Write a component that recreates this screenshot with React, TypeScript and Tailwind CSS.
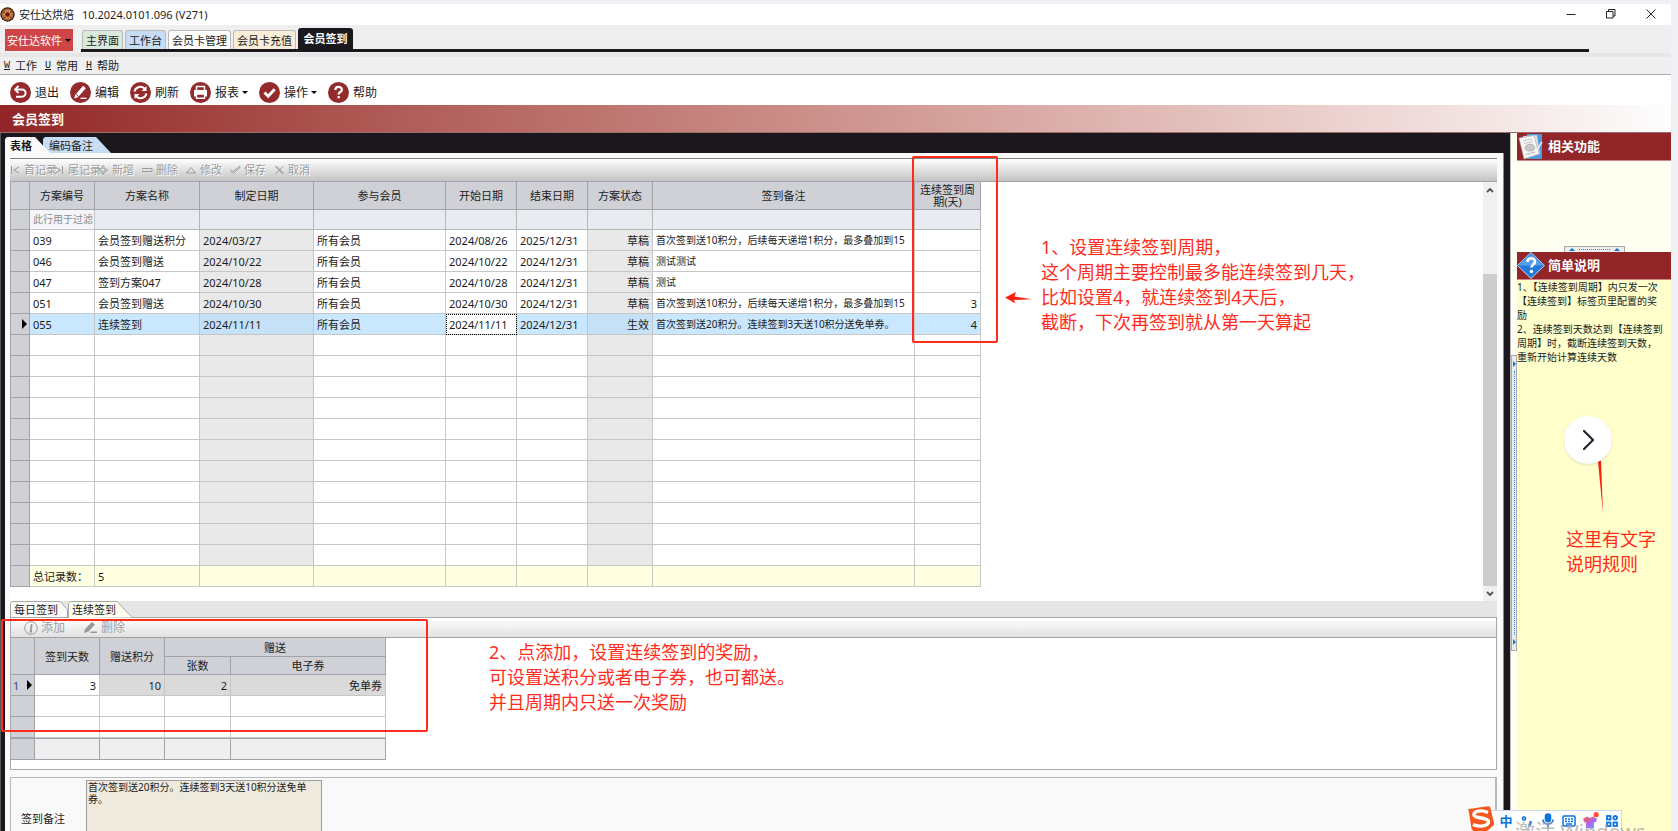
import type { ReactNode } from "react";
import clsx from "clsx";

type Plan = {
  code: string;
  name: string;
  created: string;
  members: string;
  start: string;
  end: string;
  status: string;
  remark: string;
  cycle: string;
};

const plans: Plan[] = [
  { code: "039", name: "会员签到赠送积分", created: "2024/03/27", members: "所有会员", start: "2024/08/26", end: "2025/12/31", status: "草稿", remark: "首次签到送10积分，后续每天递增1积分，最多叠加到15", cycle: "" },
  { code: "046", name: "会员签到赠送", created: "2024/10/22", members: "所有会员", start: "2024/10/22", end: "2024/12/31", status: "草稿", remark: "测试测试", cycle: "" },
  { code: "047", name: "签到方案047", created: "2024/10/28", members: "所有会员", start: "2024/10/28", end: "2024/12/31", status: "草稿", remark: "测试", cycle: "" },
  { code: "051", name: "会员签到赠送", created: "2024/10/30", members: "所有会员", start: "2024/10/30", end: "2024/12/31", status: "草稿", remark: "首次签到送10积分，后续每天递增1积分，最多叠加到15", cycle: "3" },
  { code: "055", name: "连续签到", created: "2024/11/11", members: "所有会员", start: "2024/11/11", end: "2024/12/31", status: "生效", remark: "首次签到送20积分。连续签到3天送10积分送免单券。", cycle: "4" },
];

const headers = ["方案编号", "方案名称", "制定日期", "参与会员", "开始日期", "结束日期", "方案状态", "签到备注"];

const cell = "border-r border-b border-[#c6c6c6] px-[3px] py-0 overflow-hidden whitespace-nowrap";
const head = "border-r border-b border-[#a2a3a8] bg-[#d0d1d7] p-0 font-normal";

function Circle({ children }: { children: ReactNode }) {
  return (
    <svg width="21" height="21" viewBox="0 0 21 21" fill="none" stroke="#fff" strokeWidth="2" className="shrink-0">
      <circle cx="10.5" cy="10.5" r="10.5" fill="#952a2c" stroke="none" />
      {children}
    </svg>
  );
}

function TitleBar() {
  return (
    <header className="flex h-[21px] items-center bg-white pb-px">
      <svg width="15" height="15" viewBox="0 0 15 15" className="shrink-0">
        <circle cx="7.5" cy="7.5" r="7.2" fill="#3b1c0c" />
        <circle cx="7.5" cy="7.5" r="5.9" fill="#b56a34" />
        <circle cx="7.5" cy="7.3" r="4" fill="#d08b52" />
        <circle cx="7.5" cy="7.5" r="2.3" fill="#6e1a10" />
        <path d="M3 4.500l2 1M12 4.500l-2 1M3.500 11l2-1.300M11.500 11l-2-1.300" stroke="#5a2a12" strokeWidth="1" />
      </svg>
      <span className="ml-1">安仕达烘焙</span>
      <span className="ml-2">10.2024.0101.096 (V271)</span>
      <div className="mr-[11px] ml-auto flex items-center gap-[22px]">
        <button aria-label="最小化" className="flex w-[18px] justify-center">
          <svg width="10" height="10" stroke="#222"><path d="M.5 5.500h9" /></svg>
        </button>
        <button aria-label="还原" className="flex w-[18px] justify-center">
          <svg width="10" height="10" fill="none" stroke="#222"><path d="M.5 2.500h6.500v6.500h-6.500zM2.500 2.500v-2h6.500v6.500h-2" /></svg>
        </button>
        <button aria-label="关闭" className="flex w-[18px] justify-center">
          <svg width="10" height="10" stroke="#222"><path d="M.5.5l9 9M9.500.5l-9 9" /></svg>
        </button>
      </div>
    </header>
  );
}

function WindowTabs() {
  return (
    <nav className="flex h-[28px] items-start bg-[#efefef] pt-[3px] pl-[5px]">
      <button className="mt-px flex h-[22px] w-[68px] items-center justify-center gap-[3px] bg-[#cf4446] text-white">
        安仕达软件
        <span className="border-x-[3px] border-t-[3px] border-x-transparent border-t-black" />
      </button>
      <div className="mr-[82px] ml-2 flex h-[24px] flex-1 items-end gap-[2px] border-b-[3px] border-[#1a181d] pl-px">
        <button className="h-[19px] w-[41px] rounded-t-[3px] border border-b-0 border-[#b9b9b9] bg-[#d8eadb]">主界面</button>
        <button className="h-[19px] w-[41px] rounded-t-[3px] border border-b-0 border-[#b9b9b9] bg-[#c8dcf4]">工作台</button>
        <button className="h-[19px] w-[63px] rounded-t-[3px] border border-b-0 border-[#b9b9b9] bg-white">会员卡管理</button>
        <button className="h-[19px] w-[63px] rounded-t-[3px] border border-b-0 border-[#b9b9b9] bg-[#fbeed8]">会员卡充值</button>
        <button className="h-[21px] w-[55px] rounded-t-[3px] bg-[#1a181d] font-bold text-white">会员签到</button>
      </div>
    </nav>
  );
}

function MenuBar() {
  const items = [["W", "工作"], ["U", "常用"], ["H", "帮助"]];
  return (
    <div className="flex h-[22px] items-center gap-2 border-t-4 border-b border-t-[#e6e6e6] border-b-[#adadad] bg-[#efefef] pl-1">
      {items.map(([key, label]) => (
        <button key={key} className="flex w-[33px] items-center justify-between">
          <span className="font-['Liberation_Mono',monospace] text-[10px] leading-[10px] underline">{key}</span>
          {label}
        </button>
      ))}
    </div>
  );
}

function Caret() {
  return <span className="-ml-px border-x-[3px] border-t-[3px] border-x-transparent border-t-black" />;
}

function ToolBar() {
  const btn = "flex items-center gap-1 text-[12px]";
  return (
    <div className="flex h-[30px] items-center gap-[11px] bg-white pt-[5px] pl-[10px]">
      <button className={btn}>
        <Circle><path d="M6 7.500h6a3.200 3.200 0 0 1 0 7.200H6" /><path d="M8.500 4L5 7.500 8.500 11" strokeWidth="1.800" /></Circle>
        退出
      </button>
      <button className={btn}>
        <Circle><path d="M7.500 13L14.500 5" strokeWidth="3.600" /><path d="M4.300 16.500l1-4.500 3.300 3z" fill="#fff" stroke="none" /><path d="M10.500 16.300h6" strokeWidth="1.300" /></Circle>
        编辑
      </button>
      <button className={btn}>
        <Circle>
          <path d="M4.500 9.500a6 6 0 0 1 10.500-2.500M16.500 11.500a6 6 0 0 1-10.500 2.500" />
          <path d="M16.500 4v5h-5zM4.500 17v-5h5z" fill="#fff" stroke="none" />
        </Circle>
        刷新
      </button>
      <button className={btn}>
        <Circle>
          <path d="M6.500 8V4.500h8V8" strokeWidth="1.500" />
          <path d="M4 8h13v6.500H4z" fill="#fff" stroke="none" />
          <path d="M6.500 12h8v4.300h-8z" fill="#952a2c" strokeWidth="1.400" />
        </Circle>
        报表
        <Caret />
      </button>
      <button className={btn}>
        <Circle><path d="M5.500 10.500l3.700 3.700 6.500-7" strokeWidth="3" /></Circle>
        操作
        <Caret />
      </button>
      <button className={btn}>
        <Circle>
          <path d="M7.300 8c0-4.200 6.600-4.200 6.600-.3 0 2.300-3.300 2.300-3.300 4.700" strokeWidth="2.200" />
          <path d="M9.500 14h2.300v2.300h-2.300z" fill="#fff" stroke="none" />
        </Circle>
        帮助
      </button>
    </div>
  );
}

const recordActions: [string, string][] = [
  ["首记录", "M1.500 1v8M9 2L3.500 5 9 8"],
  ["尾记录", "M8.500 1v8M1 2l5.500 3L1 8"],
  ["新增", "M4 4V1h2v3h3v2H6v3H4V6H1V4z"],
  ["删除", "M0 3.500h10v3H0z"],
  ["修改", "M.5 8L5 2.500 9.500 8z"],
  ["保存", "M0 5.500l3 3L10.500 2M1 4.500l2 2L10 1"],
  ["取消", "M1 1l7.500 8M2.500 1L9.500 8.500M9.500 1l-8 8"],
];

function RecordBar() {
  return (
    <div className="flex h-[23px] items-center border-t border-[#808080] bg-linear-to-b from-white to-[#c3c3c3] pb-px text-[#9c9c9c]">
      {recordActions.map(([label, d]) => (
        <button key={label} className="flex w-[44px] shrink-0 items-center gap-[3px] whitespace-nowrap [text-shadow:1px_1px_#fff]">
          <svg width="11" height="10" fill="none" stroke="currentColor" className="shrink-0"><path d={d} /></svg>
          {label}
        </button>
      ))}
    </div>
  );
}

function PlanTable() {
  return (
    <table className="w-[971px] table-fixed border-separate border-spacing-0 border-l border-[#a2a3a8]">
      <colgroup>
        <col className="w-[19px]" />
        <col className="w-[65px]" />
        <col className="w-[105px]" />
        <col className="w-[114px]" />
        <col className="w-[132px]" />
        <col className="w-[71px]" />
        <col className="w-[71px]" />
        <col className="w-[65px]" />
        <col className="w-[262px]" />
        <col className="w-[66px]" />
      </colgroup>
      <thead>
        <tr className="h-[28px]">
          <th className={head} />
          {headers.map((h) => (
            <th key={h} className={head}>{h}</th>
          ))}
          <th className={clsx(head, "leading-[12px]")}>连续签到周<br />期(天)</th>
        </tr>
        <tr className="h-[20px]">
          <td className={head} />
          <td className="border-r border-b border-[#c6c6c6] bg-[#f3f5f8] p-0">
            <input aria-label="过滤方案编号" placeholder="此行用于过滤" className="block w-full bg-transparent pl-[3px] text-[10px] outline-none placeholder:text-[#8c8c8c]" />
          </td>
          {Array.from({ length: 8 }, (_, i) => (
            <td key={i} className="border-r border-b border-[#b4b6ba] bg-[#e8ebf0] p-0" />
          ))}
        </tr>
      </thead>
      <tbody>
        {plans.map((p) => {
          const on = p.code === "055";
          const bg = on ? "bg-[#c9e7ff]" : "bg-white";
          const ro = on ? "bg-[#c4e1f8]" : "bg-[#e9e9e9]";
          return (
            <tr key={p.code} className="h-[21px]">
              <td className={head}>
                {on && <span className="mr-[2px] ml-auto block w-0 border-y-[5px] border-l-[5px] border-y-transparent border-l-black" />}
              </td>
              <td className={clsx(cell, bg)}>{p.code}</td>
              <td className={clsx(cell, bg)}>{p.name}</td>
              <td className={clsx(cell, ro)}>{p.created}</td>
              <td className={clsx(cell, bg)}>{p.members}</td>
              <td className={clsx(cell, on ? "bg-white outline-1 -outline-offset-1 outline-dotted outline-black" : bg)}>{p.start}</td>
              <td className={clsx(cell, bg)}>{p.end}</td>
              <td className={clsx(cell, ro, "text-right")}>{p.status}</td>
              <td className={clsx(cell, bg, "text-[10px]")}>{p.remark}</td>
              <td className={clsx(cell, bg, "text-right")}>{p.cycle}</td>
            </tr>
          );
        })}
        {Array.from({ length: 11 }, (_, r) => (
          <tr key={r} className="h-[21px]">
            <td className={head} />
            {Array.from({ length: 9 }, (_, c) => (
              <td key={c} className={clsx(cell, c === 2 || c === 6 ? "bg-[#e9e9e9]" : "bg-white")} />
            ))}
          </tr>
        ))}
      </tbody>
      <tfoot>
        <tr className="h-[21px]">
          <td className={head} />
          <td className={clsx(cell, "bg-[#ffffe1]")}>总记录数：</td>
          <td className={clsx(cell, "bg-[#ffffe1]")}>5</td>
          {Array.from({ length: 7 }, (_, c) => (
            <td key={c} className={clsx(cell, "bg-[#ffffe1]")} />
          ))}
        </tr>
      </tfoot>
    </table>
  );
}

function ScrollBar() {
  return (
    <div className="flex w-[14px] flex-col items-center bg-[#f0f0f0]">
      <svg width="14" height="17" fill="none" stroke="#505050" strokeWidth="1.800"><path d="M4 10l3-3 3 3" /></svg>
      <div className="mt-[75px] w-full flex-1 bg-[#cdcdcd]" />
      <svg width="14" height="15" fill="none" stroke="#505050" strokeWidth="1.800"><path d="M4 6l3 3 3-3" /></svg>
    </div>
  );
}

function RewardTable() {
  return (
    <table className="w-[375px] table-fixed border-separate border-spacing-0">
      <colgroup>
        <col className="w-[24px]" />
        <col className="w-[65px]" />
        <col className="w-[65px]" />
        <col className="w-[66px]" />
        <col className="w-[155px]" />
      </colgroup>
      <thead>
        <tr className="h-[19px]">
          <th rowSpan={2} className={head} />
          <th rowSpan={2} className={head}>签到天数</th>
          <th rowSpan={2} className={head}>赠送积分</th>
          <th colSpan={2} className={head}>赠送</th>
        </tr>
        <tr className="h-[18px]">
          <th className={head}>张数</th>
          <th className={head}>电子券</th>
        </tr>
      </thead>
      <tbody>
        <tr className="h-[21px] text-right">
          <td className={head}>
            <span className="flex items-center justify-between px-[2px] text-[#1d4f91]">
              1
              <span className="border-y-[5px] border-l-[5px] border-y-transparent border-l-black" />
            </span>
          </td>
          <td className={clsx(cell, "bg-white")}>3</td>
          <td className={clsx(cell, "bg-[#dadada]")}>10</td>
          <td className={clsx(cell, "bg-[#dadada]")}>2</td>
          <td className={clsx(cell, "bg-[#dadada]")}>免单券</td>
        </tr>
        {[0, 1].map((r) => (
          <tr key={r} className="h-[21px]">
            <td className={head} />
            {[0, 1, 2, 3].map((c) => (
              <td key={c} className={clsx(cell, "bg-white")} />
            ))}
          </tr>
        ))}
      </tbody>
      <tfoot>
        <tr className="h-[22px]">
          <td className={clsx(head, "border-t")} />
          {[0, 1, 2, 3].map((c) => (
            <td key={c} className="border-t border-r border-b border-[#a2a3a8] bg-[#efefef] p-0" />
          ))}
        </tr>
      </tfoot>
    </table>
  );
}

function SubTabs() {
  return (
    <div className="flex h-[17px] items-end border-b border-[#a8a8a8] bg-[#e5e5e5]">
      <button className="relative h-[16px] w-[58px] pl-1 text-left">
        <svg width="58" height="16" className="absolute inset-0" fill="#fafafa" stroke="#a8a8a8">
          <path d="M.5 16V2.500l2-2H50l7.500 8V16" />
        </svg>
        <span className="relative">每日签到</span>
      </button>
      <button className="relative h-[16px] w-[65px] pl-1 text-left">
        <svg width="65" height="17" className="absolute top-0 left-0" fill="#fffff2" stroke="#a8a8a8">
          <path d="M.5 17V2.500l2-2H49L64 16.500" />
        </svg>
        <span className="relative">连续签到</span>
      </button>
    </div>
  );
}

function MainPane() {
  return (
    <main className="flex min-w-0 flex-1 flex-col border-l border-[#55555c] bg-[#1a181d] pr-[6px] pl-1">
      <div className="flex h-[20px] items-end">
        <button className="relative h-[16px] w-[38px] pl-[5px] text-left font-bold">
          <svg width="45" height="16" className="absolute top-0 left-0 z-10" fill="#fafafa"><path d="M0 16V2l2-2h28l15 16z" /></svg>
          <span className="relative z-10">表格</span>
        </button>
        <button className="relative h-[16px] w-[68px] pl-[6px] text-left">
          <svg width="68" height="16" className="absolute top-0 left-0" fill="#c8dcf4"><path d="M0 10V2l2-2h51l15 16H6z" /></svg>
          <span className="relative">编码备注</span>
        </button>
      </div>
      <div className="flex min-h-0 flex-1 flex-col border-r border-[#8a8a8a] bg-[#fafafa] pt-[5px] pr-[6px] pl-[5px]">
        <RecordBar />
        <div className="flex shrink-0 justify-between border-t border-[#a2a3a8] bg-white">
          <div className="pb-[14px]"><PlanTable /></div>
          <ScrollBar />
        </div>
        <SubTabs />
        <section className="shrink-0 border border-t-0 border-[#a8a8a8] bg-white pb-[9px]">
          <div className="flex h-[20px] items-center gap-[19px] border-b border-[#a2a2a2] bg-linear-to-b from-white to-[#e2e2e2] pl-[13px] text-[12px] text-[#a0a0a0]">
            <button className="flex items-center gap-[3px]">
              <svg width="14" height="14" fill="none" stroke="#999"><circle cx="7" cy="7" r="6.300" /><path d="M7.500 3v2M6.300 6h1.200l-1 4.500h1.500" strokeWidth="1.800" /></svg>
              添加
            </button>
            <button className="flex items-center gap-1">
              <svg width="13" height="13" fill="#999"><path d="M0 12l1-4L8 1l3 2.500-6.500 7zM7 10.500h6V12H6z" /></svg>
              删除
            </button>
          </div>
          <RewardTable />
        </section>
        <section className="mt-[7px] flex min-h-0 flex-1 items-start border-t border-r-2 border-l border-[#b8b8b8] bg-[#f9f9f9] pt-[2px]">
          <label htmlFor="remark" className="w-[75px] pt-[31px] pl-[10px]">签到备注</label>
          <textarea
            id="remark"
            readOnly
            className="block h-[64px] w-[236px] resize-none border border-[#9d9d9d] bg-[#eeeade] px-px text-[10px] leading-[12px] outline-none"
            value="首次签到送20积分。连续签到3天送10积分送免单券。"
          />
        </section>
      </div>
    </main>
  );
}

function SideHead({ title, children }: { title: string; children: ReactNode }) {
  return (
    <h2 className="flex h-[28px] shrink-0 items-center gap-[3px] border-b border-[#c88] bg-[#922527] text-[13px] font-bold text-white">
      {children}
      {title}
    </h2>
  );
}

function SidePane() {
  return (
    <aside className="flex w-[161px] shrink-0 border-l border-[#bdbdbd] bg-[#fffff2]">
      <div className="flex w-[6px] flex-col pt-[222px]">
        <div className="flex h-[296px] flex-col items-center justify-between border border-[#a9a9a9] bg-[#ececf0] py-[5px]">
          <span className="border-y-[3px] border-l-[3px] border-y-transparent border-l-[#0a78d0]" />
          <span className="my-1 flex-1 border-l border-dotted border-[#2f8ede]" />
          <span className="border-y-[3px] border-l-[3px] border-y-transparent border-l-[#0a78d0]" />
        </div>
      </div>
      <div className="flex min-w-0 flex-1 flex-col">
        <SideHead title="相关功能">
          <svg width="28" height="26" viewBox="0 0 28 26">
            <path d="M10 0h15v25H10z" fill="#4f9be0" />
            <path d="M6 2L20 1l3 19-14 4z" fill="#dcdcdc" />
            <path d="M2 4L17 1.500l5 18.500-15 5z" fill="#f6f6f6" stroke="#aaa" strokeWidth=".6" />
            <path d="M6 7l9-2M7 9.500l9-2" fill="none" stroke="#c4c4c4" strokeWidth="1" />
            <path d="M8 13c2-3 7-4 9-1s-1 5-4 5-5-1-5-4zM9 20.500l9-2.500" fill="#c9c9c9" stroke="#a5a5a5" strokeWidth=".8" />
            <path d="M25 8l-5 8" stroke="#e3effa" strokeWidth="1.500" />
          </svg>
        </SideHead>
        <div className="flex h-[91px] items-end justify-center">
          <div className="flex h-[6px] w-[61px] items-center justify-between border border-b-0 border-[#a9a9a9] bg-[#ececf0] px-1">
            <span className="border-x-[3px] border-b-[3px] border-x-transparent border-b-[#0a78d0]" />
            <span className="mx-1 flex-1 border-t border-dotted border-[#2f8ede]" />
            <span className="border-x-[3px] border-b-[3px] border-x-transparent border-b-[#0a78d0]" />
          </div>
        </div>
        <SideHead title="简单说明">
          <svg width="28" height="27" viewBox="0 0 28 27">
            <path d="M14 .5L27.500 13.500 14 26.500.5 13.500z" fill="#2479dc" stroke="#bcd9f6" />
            <path d="M14 2L26 13.500H2z" fill="#5a9fe9" />
            <path d="M10.500 10c0-5 7.500-5 7.500-.5 0 3-3.500 3-3.500 6" fill="none" stroke="#fff" strokeWidth="2.600" />
            <circle cx="14.400" cy="19.500" r="1.700" fill="#fff" />
          </svg>
        </SideHead>
        <div className="flex-1 bg-[#ffffcc] text-[10px] leading-[14px] whitespace-nowrap">
          <p>1、【连续签到周期】内只发一次<br />【连续签到】标签页里配置的奖<br />励</p>
          <p>2、连续签到天数达到【连续签到<br />周期】时，截断连续签到天数，<br />重新开始计算连续天数</p>
        </div>
      </div>
    </aside>
  );
}

function InputMethodBar() {
  return (
    <div className="absolute top-[806px] left-[1467px] flex h-[25px] items-end">
      <div className="absolute top-1 right-0 left-[14px] h-[24px] border border-[#ccd8ea] bg-white" />
      <svg width="28" height="25" viewBox="0 0 28 25" className="relative">
        <path d="M1.500 4Q0 3.500 2 3L21 .3q2-.3 2.400 1.500L27 17q.4 2-1.200 3L20 25H7Q5 24.500 4.600 23z" fill="#f4581f" />
        <path d="M21 6.500C14 3.500 6.500 5 7 9s14 2 14.500 6.500S12 21.500 6 18.500" fill="none" stroke="#fff" strokeWidth="3.400" />
      </svg>
      <div className="relative flex h-[21px] items-center gap-[7px] px-1 text-[#0b74da]">
        <span className="w-[14px] text-center text-[13px] leading-[14px] font-bold">中</span>
        <svg width="14" height="14" fill="none" stroke="currentColor" strokeWidth="1.600"><circle cx="4" cy="4.500" r="1.500" /><path d="M10.500 7v2.500L9 12" strokeWidth="2.200" /></svg>
        <svg width="14" height="15" fill="none" stroke="currentColor" strokeWidth="1.600"><rect x="4.500" y="1" width="5" height="7.500" rx="2.500" fill="currentColor" /><path d="M2 6.500c0 6 10 6 10 0M7 11v3.500" /></svg>
        <svg width="14" height="12" fill="none" stroke="currentColor" strokeWidth="1.500"><rect x="1" y="1" width="12" height="10" rx="1" /><path d="M3 4h8M3 6.500h8" strokeDasharray="2 1" /><path d="M4 9h6" /></svg>
        <svg width="16" height="17" viewBox="0 0 16 17">
          <defs>
            <linearGradient id="shirt" x1="0" y1="0" x2="1" y2="1">
              <stop offset="0" stopColor="#ff5a3c" />
              <stop offset=".6" stopColor="#a56bff" />
              <stop offset="1" stopColor="#49b6ff" />
            </linearGradient>
          </defs>
          <path d="M0 7l4-2.500q3 2.500 6 0L14 7l-1.500 3.500-1.500-.5v6H3v-6l-1.500.5z" fill="url(#shirt)" />
          <circle cx="13.200" cy="2.700" r="2.600" fill="#ff5233" />
        </svg>
        <svg width="12" height="12" fill="none" stroke="currentColor" strokeWidth="1.800"><rect x="1" y="1" width="3.500" height="3.500" /><circle cx="9.200" cy="2.800" r="1.800" /><rect x="1" y="7.500" width="3.500" height="3.500" /><rect x="7.500" y="7.500" width="3.500" height="3.500" /></svg>
      </div>
    </div>
  );
}

function Annotations() {
  const note = "absolute text-[18px] leading-[25px] whitespace-nowrap text-[#ff2b1c]";
  return (
    <>
      <div className="pointer-events-none absolute top-[156px] left-[912px] h-[187px] w-[86px] rounded-[2px] border-2 border-[#ff2b1c]" />
      <div className="pointer-events-none absolute top-[619px] left-[1px] h-[113px] w-[427px] rounded-[2px] border-2 border-[#ff2b1c]" />
      <svg width="28" height="12" viewBox="0 0 28 12" fill="#ff1f10" className="absolute top-[292px] left-[1005px]">
        <path d="M0 5.500L11 0 9.500 4.500 27 7.300 9 8l1.500 3.500z" />
      </svg>
      <p className={clsx(note, "top-[235px] left-[1041px]")}>
        1、设置连续签到周期，<br />这个周期主要控制最多能连续签到几天，<br />比如设置4，就连续签到4天后，<br />截断，下次再签到就从第一天算起
      </p>
      <p className={clsx(note, "top-[640px] left-[489px]")}>
        2、点添加，设置连续签到的奖励，<br />可设置送积分或者电子券，也可都送。<br />并且周期内只送一次奖励
      </p>
      <svg width="8" height="54" viewBox="0 0 8 54" fill="#ff1f10" className="absolute top-[460px] left-[1597px]">
        <path d="M1 1.500L4 .5 6 53.500z" />
      </svg>
      <p className={clsx(note, "top-[527px] left-[1566px]")}>这里有文字<br />说明规则</p>
      <button aria-label="下一张" className="absolute top-[416px] left-[1564px] flex size-12 items-center justify-center rounded-full bg-white shadow-sm">
        <svg width="14" height="22" fill="none" stroke="#222633" strokeWidth="2.200" strokeLinecap="round" strokeLinejoin="round"><path d="M3 2l9 9-9 9" /></svg>
      </button>
    </>
  );
}

export default function App() {
  return (
    <div className="relative flex h-screen flex-col overflow-hidden bg-[#eef0f3] pt-1 pr-[7px] font-['Noto_Sans','Noto_Sans_CJK_SC',sans-serif] text-[11px] leading-[15px] text-[#1c1c1c]">
      <TitleBar />
      <WindowTabs />
      <MenuBar />
      <ToolBar />
      <h1 className="h-[28px] shrink-0 border-b border-[#a06a6c] bg-linear-to-r from-[#922527] to-[#fdfdfd] pl-[12px] text-[13px] leading-[28px] font-bold text-white">会员签到</h1>
      <div className="flex min-h-0 flex-1">
        <MainPane />
        <SidePane />
      </div>
      <Annotations />
      <InputMethodBar />
      <span className="absolute top-[822px] left-[1515px] text-[20px] leading-[20px] whitespace-nowrap text-[#a9a9a9]/80">激活 Windows</span>
    </div>
  );
}
